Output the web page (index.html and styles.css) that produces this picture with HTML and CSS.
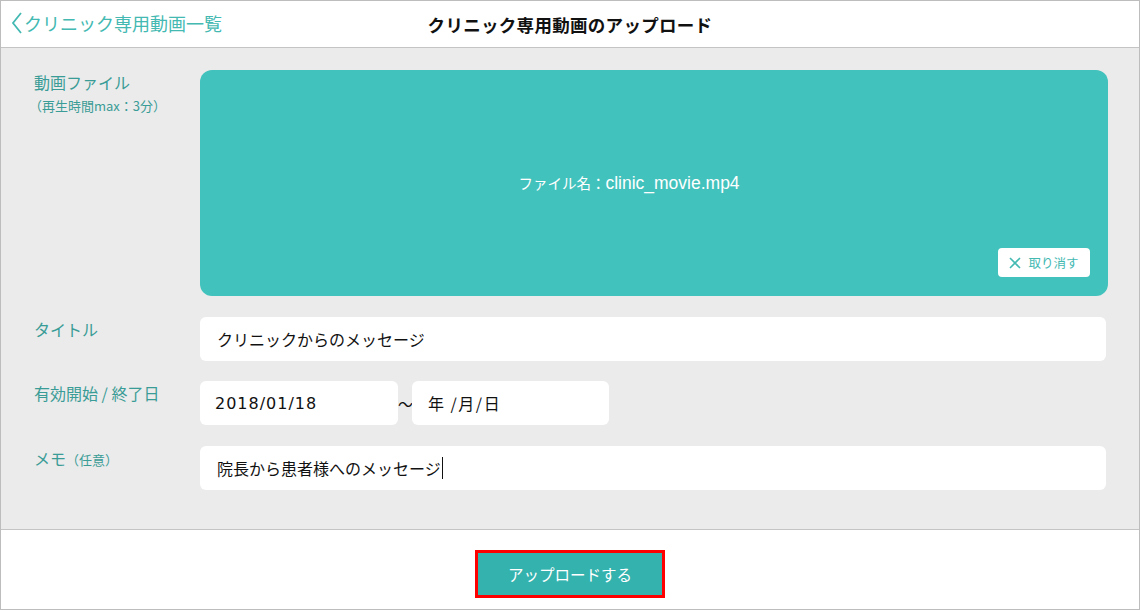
FILE: index.html
```html
<!DOCTYPE html>
<html lang="ja">
<head>
    <meta charset="UTF-8">
    <title>クリニック専用動画のアップロード</title>
    <link rel="stylesheet" href="styles.css">
</head>
<body>
    <div class="page">
        <!-- ヘッダー -->
        <header class="header">
            <a class="back" href="#">
                <svg class="back-icon" width="12" height="22" viewBox="0 0 12 22">
                    <path d="M10 1 L2 11 L10 21" fill="none" stroke="#43b9b2" stroke-width="1.8"/>
                </svg>
                クリニック専用動画一覧
            </a>
            <h1 class="title">クリニック専用動画のアップロード</h1>
        </header>

        <!-- フォーム -->
        <main class="main">
            <div class="row">
                <div class="label">
                    動画ファイル
                    <span class="sub">（再生時間max：3分）</span>
                </div>
                <div class="field">
                    <div class="dropzone">
                        <span class="filename"><span class="jp">ファイル名：</span>clinic_movie.mp4</span>
                        <button class="cancel" type="button">
                            <svg width="12" height="12" viewBox="0 0 12 12">
                                <path d="M1 1 L11 11 M11 1 L1 11" stroke="#43b9b2" stroke-width="1.6"/>
                            </svg>
                            取り消す
                        </button>
                    </div>
                </div>
            </div>

            <div class="row">
                <div class="label">タイトル</div>
                <div class="field">
                    <div class="input">クリニックからのメッセージ</div>
                </div>
            </div>

            <div class="row">
                <div class="label">有効開始 / 終了日</div>
                <div class="field dates">
                    <div class="input date">2018/01/18</div>
                    <span class="tilde">～</span>
                    <div class="input date">年 /月/日</div>
                </div>
            </div>

            <div class="row">
                <div class="label">メモ<span class="opt">（任意）</span></div>
                <div class="field">
                    <div class="input">院長から患者様へのメッセージ<span class="caret"></span></div>
                </div>
            </div>
        </main>

        <!-- フッター -->
        <footer class="footer">
            <button class="submit" type="button">アップロードする</button>
        </footer>
    </div>
</body>
</html>
```

FILE: styles.css
```css
* {
    box-sizing: border-box;
}
body {
    margin: 0;
    font-family: "Noto Sans CJK JP", "Noto Sans", sans-serif;
    background-color: #fff;
}
.page {
    width: 1140px;
    height: 610px;
    border: 1px solid #bdbdbd;
    display: flex;
    flex-direction: column;
}
.header {
    height: 47px;
    flex: none;
    border-bottom: 1px solid #c4c4c4;
    position: relative;
    display: flex;
    align-items: center;
    justify-content: center;
}
.back {
    position: absolute;
    left: 10px;
    top: 9px;
    display: flex;
    align-items: center;
    gap: 1px;
    color: #43b9b2;
    font-size: 18px;
    text-decoration: none;
    line-height: 26px;
}
.title {
    margin: 0;
    font-size: 17.5px;
    font-weight: bold;
    color: #111;
    letter-spacing: 0.3px;
}
.main {
    height: 482px;
    flex: none;
    background-color: #ebebeb;
    border-bottom: 1px solid #c4c4c4;
    padding: 22px 32px 0 33px;
    display: flex;
    flex-direction: column;
    gap: 21px;
}
.row {
    display: flex;
}
.row:nth-child(3) {
    margin-top: -1px;
}
.label {
    width: 166px;
    flex: none;
    color: #3a9c96;
    font-size: 16px;
    line-height: 22px;
    padding-top: 1px;
}
.label .sub {
    display: block;
    font-size: 13px;
    margin-top: 2px;
    margin-left: -5px;
}
.label .opt {
    font-size: 13px;
}
.field {
    flex: 1;
}
.dropzone {
    position: relative;
    height: 226px;
    width: 908px;
    background-color: #42c2bd;
    border-radius: 12px;
    display: flex;
    align-items: center;
    justify-content: center;
}
.filename {
    color: #fff;
    font-family: "Liberation Sans", "Noto Sans CJK JP", sans-serif;
    font-size: 17.5px;
    margin-right: 50px;
}
.filename .jp {
    font-family: "Noto Sans CJK JP", sans-serif;
    font-size: 14.5px;
}
.cancel {
    position: absolute;
    right: 18px;
    bottom: 19px;
    width: 92px;
    height: 29px;
    border: none;
    border-radius: 4px;
    background-color: #fff;
    color: #43b9b2;
    font-family: inherit;
    font-size: 12.5px;
    display: flex;
    align-items: center;
    justify-content: center;
    gap: 7px;
}
.input {
    height: 44px;
    width: 906px;
    background-color: #fff;
    border-radius: 6px;
    padding-left: 17px;
    font-size: 16px;
    color: #111;
    display: flex;
    align-items: center;
}
.dates {
    display: flex;
    align-items: center;
}
.input.date {
    width: 198px;
    padding-left: 15px;
    font-family: "DejaVu Sans", "Noto Sans CJK JP", sans-serif;
    letter-spacing: 1px;
}
.input.date:last-child {
    width: 197px;
    padding-left: 16px;
    font-family: "Noto Sans CJK JP", sans-serif;
    letter-spacing: 1.5px;
}
.tilde {
    width: 14px;
    font-size: 15px;
    color: #111;
    text-align: center;
}
.caret {
    display: inline-block;
    width: 1px;
    height: 22px;
    background-color: #111;
    margin-left: 1px;
}
.footer {
    flex: 1;
    display: flex;
    justify-content: center;
    padding-top: 20px;
}
.submit {
    width: 190px;
    height: 48px;
    border: 3px solid #ff0000;
    background-color: #34b2ae;
    color: #fff;
    font-family: inherit;
    font-size: 15.5px;
}
```
